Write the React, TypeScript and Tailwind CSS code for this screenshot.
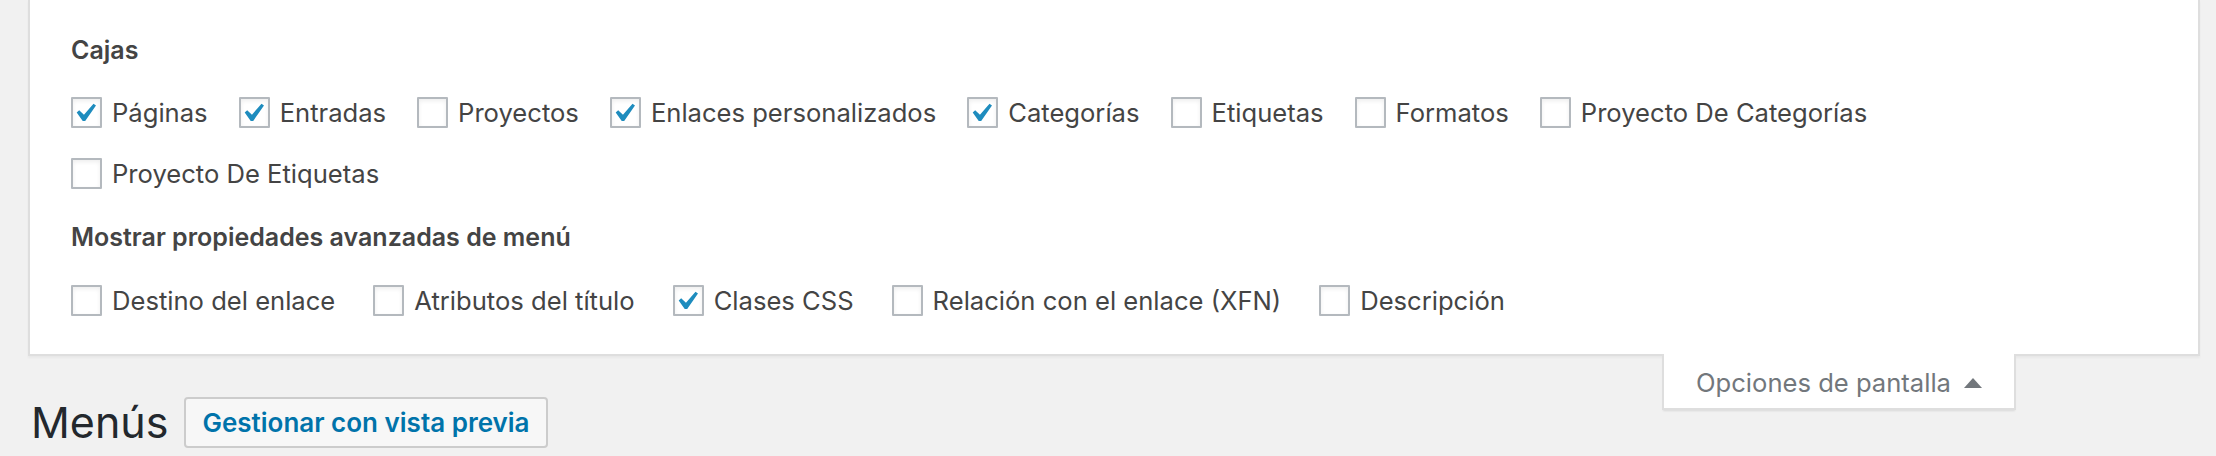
import React from "react";

type Item = [string, boolean];

const row1: Item[] = [
  ["Páginas", true],
  ["Entradas", true],
  ["Proyectos", false],
  ["Enlaces personalizados", true],
  ["Categorías", true],
  ["Etiquetas", false],
  ["Formatos", false],
  ["Proyecto De Categorías", false],
];
const row2: Item[] = [["Proyecto De Etiquetas", false]];
const row3: Item[] = [
  ["Destino del enlace", false],
  ["Atributos del título", false],
  ["Clases CSS", true],
  ["Relación con el enlace (XFN)", false],
  ["Descripción", false],
];

function Checkbox({ checked }: { checked: boolean }) {
  return (
    <span className="flex h-[31px] w-[31px] shrink-0 items-center justify-center rounded-[1px] border-2 border-[#b4b9be] bg-white shadow-[inset_0_2px_4px_rgba(0,0,0,0.07)]">
      {checked && (
        <svg width="27" height="27" viewBox="3.79 2.36 14.54 14.54" aria-hidden="true">
          <path
            d="M14.83 4.89l1.34.94-5.81 8.38H9.02L5.78 9.67l1.34-1.25 2.57 2.4z"
            fill="#1e8cbe"
          />
        </svg>
      )}
    </span>
  );
}

function Row({ items, gap }: { items: Item[]; gap: string }) {
  return (
    <div className={`flex h-[31px] items-center ${gap}`}>
      {items.map(([label, checked]) => (
        <label key={label} className="flex items-center gap-[10px]">
          <Checkbox checked={checked} />
          <span className="whitespace-nowrap text-[25.6px] leading-[30px] text-[#444]">{label}</span>
        </label>
      ))}
    </div>
  );
}

export default function App() {
  return (
    <div className="h-[456px] w-full overflow-hidden bg-[#f1f1f1] pl-[28px] pr-[16px] font-['Inter','Noto_Sans',sans-serif]">
      <div className="border-x-2 border-b-2 border-[#dedede] bg-white pb-[38px] pl-[41px] pt-[35px] shadow-[0_2px_2px_rgba(0,0,0,0.04)]">
        <div className="text-[25px] font-semibold leading-[30px] text-[#444]">Cajas</div>
        <div className="mt-[32px] flex flex-col gap-[30px]">
          <Row items={row1} gap="gap-x-[31px]" />
          <Row items={row2} gap="gap-x-[31px]" />
        </div>
        <div className="mt-[33px] text-[25px] font-semibold leading-[30px] text-[#444]">
          Mostrar propiedades avanzadas de menú
        </div>
        <div className="mt-[33px]">
          <Row items={row3} gap="gap-x-[38px]" />
        </div>
      </div>
      <div className="flex items-start justify-between">
        <div className="flex items-center gap-[16px] pl-[3px] pt-[41px]">
          <h1 className="text-[43px] font-normal leading-[51px] text-[#23282d]">Menús</h1>
          <button className="flex h-[51px] items-center rounded-[4px] border-2 border-[#cccccc] bg-[#f7f7f7] px-[16px] text-[26px] font-semibold leading-[30px] text-[#0073aa]">
            Gestionar con vista previa
          </button>
        </div>
        <div className="relative z-10 -mt-[2px] mr-[184px] flex items-center gap-[13px] border-x-2 border-b-2 border-[#dedede] bg-white pb-[10px] pl-[32px] pr-[32px] pt-[14px] shadow-[0_2px_2px_-1px_rgba(0,0,0,0.1)]">
          <span className="text-[25.6px] leading-[30px] text-[#72777c]">Opciones de pantalla</span>
          <svg width="18" height="10" viewBox="0 0 18 10" aria-hidden="true">
            <path d="M9 0L18 10H0z" fill="#72777c" />
          </svg>
        </div>
      </div>
    </div>
  );
}
